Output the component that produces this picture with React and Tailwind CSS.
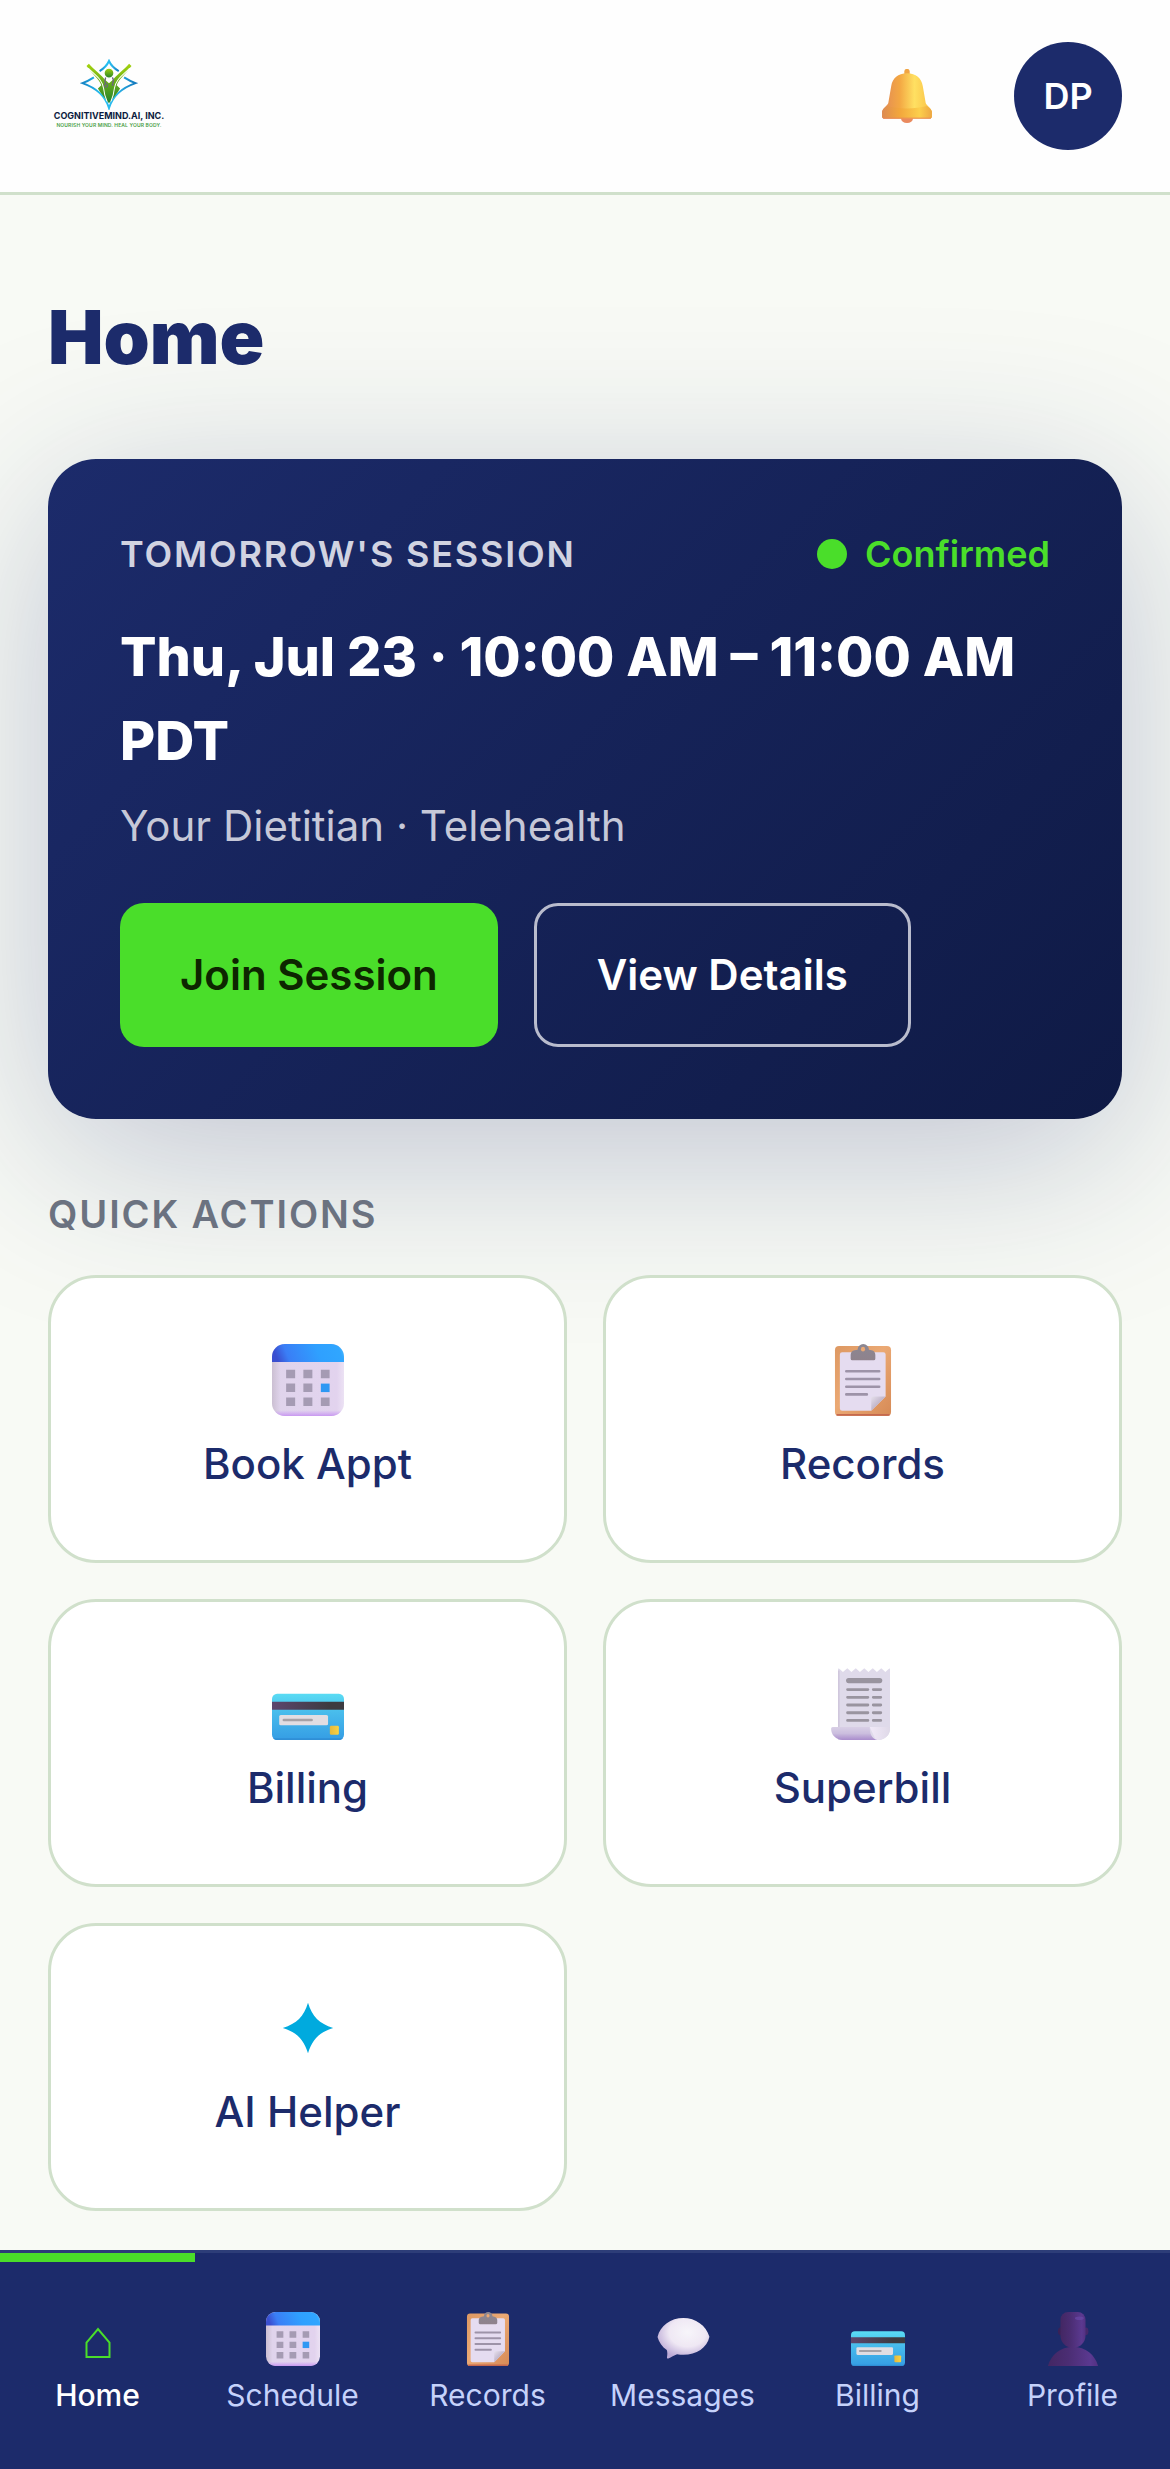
import React, { useState } from "react";

const QUICK_ACTIONS = [
  { label: "Book Appt", Icon: CalendarIcon },
  { label: "Records", Icon: ClipboardIcon },
  { label: "Billing", Icon: CreditCardIcon },
  { label: "Superbill", Icon: ReceiptIcon },
  { label: "AI Helper", Icon: SparkIcon },
];

const NAV_ITEMS = [
  { label: "Home", Icon: HouseIcon },
  { label: "Schedule", Icon: CalendarIcon },
  { label: "Records", Icon: ClipboardIcon },
  { label: "Messages", Icon: BubbleIcon },
  { label: "Billing", Icon: CreditCardIcon },
  { label: "Profile", Icon: PersonIcon },
];

/** Gradients shared by all the icons */
function IconDefs() {
  return (
    <svg className="absolute size-0" aria-hidden="true">
      <defs>
        <linearGradient id="cal-top" x1="0" x2="1" y1="0.1" y2="0">
          <stop offset="0" stopColor="#3a4fd0" />
          <stop offset="0.16" stopColor="#3a7ef6" />
          <stop offset="0.6" stopColor="#2fa0ff" />
          <stop offset="0.9" stopColor="#30a6ff" />
          <stop offset="1" stopColor="#55c4ff" />
        </linearGradient>
        <linearGradient id="cal-body" x1="0" x2="1" y1="0" y2="0">
          <stop offset="0" stopColor="#cbbfd2" />
          <stop offset="0.12" stopColor="#e0d4ec" />
          <stop offset="0.9" stopColor="#e2d3ee" />
          <stop offset="1" stopColor="#ece2f4" />
        </linearGradient>
        <linearGradient id="cal-foot" x1="0" x2="0" y1="0" y2="1">
          <stop offset="0.92" stopColor="#cc9df5" stopOpacity="0" />
          <stop offset="1" stopColor="#c898f0" />
        </linearGradient>
        <linearGradient id="board" x1="0" x2="1" y1="0" y2="1">
          <stop offset="0" stopColor="#dd9862" />
          <stop offset="0.45" stopColor="#eba974" />
          <stop offset="1" stopColor="#d68a56" />
        </linearGradient>
        <linearGradient id="fold" x1="0" x2="1" y1="0" y2="1">
          <stop offset="0" stopColor="#e6e0ec" />
          <stop offset="0.5" stopColor="#c1b6cb" />
        </linearGradient>
        <linearGradient id="clip" x1="0" x2="0" y1="0" y2="1">
          <stop offset="0" stopColor="#8b8792" />
          <stop offset="1" stopColor="#8f828c" />
        </linearGradient>
        <linearGradient id="card-body" x1="0" x2="0" y1="0" y2="1">
          <stop offset="0" stopColor="#5adcf4" />
          <stop offset="0.4" stopColor="#48bcec" />
          <stop offset="1" stopColor="#359de4" />
        </linearGradient>
        <linearGradient id="card-stripe" x1="0" x2="1" y1="0" y2="0">
          <stop offset="0" stopColor="#5d466e" />
          <stop offset="0.8" stopColor="#3d3b40" />
        </linearGradient>
        <linearGradient id="chip" x1="0" x2="1" y1="0" y2="0">
          <stop offset="0" stopColor="#e6b93a" />
          <stop offset="1" stopColor="#f8d244" />
        </linearGradient>
        <linearGradient id="curl" x1="0" x2="0" y1="0" y2="1">
          <stop offset="0" stopColor="#d9d0e6" />
          <stop offset="0.5" stopColor="#cbbede" />
          <stop offset="1" stopColor="#a98ccc" />
        </linearGradient>
        <linearGradient id="curl-end" x1="0" x2="1" y1="0" y2="0">
          <stop offset="0" stopColor="#f1e9f8" />
          <stop offset="1" stopColor="#dfd9e8" />
        </linearGradient>
        <radialGradient id="bubble" cx="0.58" cy="0.35" r="0.65">
          <stop offset="0" stopColor="#f7f5fa" />
          <stop offset="0.55" stopColor="#efe8f4" />
          <stop offset="1" stopColor="#bcaad6" />
        </radialGradient>
        <linearGradient id="person" x1="0" x2="1" y1="0" y2="0">
          <stop offset="0" stopColor="#432763" />
          <stop offset="0.4" stopColor="#4b2d73" />
          <stop offset="0.85" stopColor="#5b3990" />
          <stop offset="1" stopColor="#523182" />
        </linearGradient>
        <linearGradient id="bell" x1="0" x2="1" y1="0" y2="0">
          <stop offset="0" stopColor="#e28a56" />
          <stop offset="0.35" stopColor="#f3a743" />
          <stop offset="0.65" stopColor="#ffe062" />
          <stop offset="1" stopColor="#f9bf45" />
        </linearGradient>
        <linearGradient id="bell-rim" x1="0" x2="1" y1="0" y2="0">
          <stop offset="0" stopColor="#dd8b52" />
          <stop offset="0.35" stopColor="#f2a63c" />
          <stop offset="0.75" stopColor="#fccf4c" />
          <stop offset="1" stopColor="#eda743" />
        </linearGradient>
        <linearGradient id="logo-green" x1="0" x2="0" y1="0" y2="1">
          <stop offset="0" stopColor="#a6d40c" />
          <stop offset="1" stopColor="#22802b" />
        </linearGradient>
        <linearGradient id="logo-blue" x1="0" x2="1" y1="0" y2="0">
          <stop offset="0" stopColor="#1583c4" />
          <stop offset="0.35" stopColor="#25c0f2" />
          <stop offset="0.65" stopColor="#29b5ea" />
          <stop offset="1" stopColor="#1479bd" />
        </linearGradient>
      </defs>
    </svg>
  );
}

function CalendarIcon({ className }) {
  return (
    <svg viewBox="2 2 28 28" className={className} aria-hidden="true">
      <rect x="2" y="2" width="28" height="28" rx="5" fill="url(#cal-body)" />
      <rect x="2" y="2" width="28" height="28" rx="5" fill="url(#cal-foot)" />
      <path d="M2 9V7a5 5 0 0 1 5-5h18a5 5 0 0 1 5 5v2Z" fill="url(#cal-top)" />
      <path
        d="M7.5 12H11v3.3H7.5ZM14.2 12h3.5v3.3h-3.5ZM21 12h3.4v3.3H21ZM7.5 17.4H11v3.3H7.5ZM14.2 17.4h3.5v3.3h-3.5ZM7.5 22.8H11v3.3H7.5ZM14.2 22.8h3.5v3.3h-3.5ZM21 22.8h3.4v3.3H21Z"
        fill="#a59bb3"
      />
      <path d="M21 17.4h3.4v3.3H21Z" fill="#2f98f3" />
    </svg>
  );
}

function ClipboardIcon({ className }) {
  return (
    <svg viewBox="2 2 28 28" className={className} aria-hidden="true">
      <rect x="5.1" y="2.8" width="21.8" height="27.2" rx="1.6" fill="url(#board)" />
      <path d="M6 29.6h20" stroke="#c5694f" strokeWidth="0.7" strokeLinecap="round" />
      <path
        d="M7.9 5.2h16a.9.9 0 0 1 .9.9v16.3L19.2 28H7.9a.9.9 0 0 1-.9-.9v-21a.9.9 0 0 1 .9-.9Z"
        fill="#e5dcf0"
      />
      <path d="M19.2 28v-4.9a.7.7 0 0 1 .7-.7h4.9Z" fill="url(#fold)" />
      <path
        d="M13.9 4.2a2.2 2.2 0 0 1 4.4 0l1 .2a1.9 1.9 0 0 1 1.5 1.8v1.5a.6.6 0 0 1-.6.6h-8.4a.6.6 0 0 1-.6-.6V6.2a1.9 1.9 0 0 1 1.5-1.8Z"
        fill="url(#clip)"
      />
      <ellipse cx="16" cy="4" rx="0.8" ry="0.9" fill="#eba974" />
      <path
        d="M9.5 12.6h12.8M9.5 15.6h12.8M9.5 18.6h12.8M9.5 21.6h8"
        stroke="#9d93a8"
        strokeWidth="1"
        strokeLinecap="round"
      />
    </svg>
  );
}

function CreditCardIcon({ className }) {
  return (
    <svg viewBox="2 2 28 28" className={className} aria-hidden="true">
      <rect x="2" y="12" width="28" height="18" rx="2" fill="url(#card-body)" />
      <path d="M2.4 29.3a2 2 0 0 0 1.600.7h24a2 2 0 0 0 1.600-.7Z" fill="#2f8fd6" />
      <path d="M2 15.1h28v3.1H2Z" fill="url(#card-stripe)" />
      <rect x="4.8" y="20.3" width="19" height="4" rx="0.6" fill="#e1dde2" />
      <path d="M6.600 22.200h10.800" stroke="#a5a1a6" strokeWidth="1" strokeLinecap="round" />
      <rect x="24.5" y="24.5" width="3.5" height="3.5" rx="0.5" fill="url(#chip)" />
    </svg>
  );
}

function ReceiptIcon({ className }) {
  return (
    <svg viewBox="2 2 28 28" className={className} aria-hidden="true">
      <path
        d="M6.3 2.2l.5.1 1.400 1.300L9.900 2.100l1.600 1.500 1.700-1.500 1.600 1.500 1.700-1.500 1.600 1.500 1.700-1.500 1.600 1.500 1.700-1.500 1.600 1.500 1.400-1.300.4-.1V25.500a4.500 4.500 0 0 1-4.500 4.500H6.300Z"
        fill="#dfdaea"
      />
      <path d="M6.6 3v22" stroke="#cfc6dc" strokeWidth="0.6" />
      <path d="M10.4 6.9h12.1" stroke="#99949f" strokeWidth="2" strokeLinecap="round" />
      <path
        d="M10 10.4h7.9M20 10.4h2.9M10 13.4h7.9M20 13.4h2.9M10 16.4h7.9M20 16.4h2.9M10 19.4h7.9M20 19.4h2.9M10 22.4h7.9M20 22.4h2.9"
        stroke="#99949f"
        strokeWidth="1.1"
        strokeLinecap="round"
      />
      <path d="M18.6 24.9h7.9v.6a4.500 4.500 0 0 1-4.500 4.500h-1Z" fill="url(#curl-end)" />
      <path
        d="M4.2 24.9h14.4c0 2.800.9 4.500 3 5.100H8a4.400 4.400 0 0 1-4.400-4.500.6.6 0 0 1 .6-.6Z"
        fill="url(#curl)"
      />
    </svg>
  );
}

function SparkIcon({ className }) {
  return (
    <svg viewBox="2 2 28 28" className={className} aria-hidden="true">
      <path
        d="M16 6.2C17.7 11.6 20.3 14.3 25.8 16C20.3 17.7 17.7 20.4 16 25.8C14.3 20.4 11.7 17.7 6.2 16C11.7 14.3 14.3 11.6 16 6.2Z"
        fill="#00aade"
      />
    </svg>
  );
}

function HouseIcon({ className }) {
  return (
    <svg viewBox="0 0 54 54" className={className} aria-hidden="true">
      <path d="M15.5 45V30.500L27 17l11.500 13.500V45Z" fill="none" stroke="#4ade2a" strokeWidth="2" />
    </svg>
  );
}

function BubbleIcon({ className }) {
  return (
    <svg viewBox="2 2 28 28" className={className} aria-hidden="true">
      <path
        d="M16.2 5.1C22.5 5.1 28 9 29.7 14.8C28.5 20.5 23 24.2 16.2 24.2C15.2 24.2 14 24.1 12.9 23.9C11.4 24.5 9.9 25.5 8.4 26.1C7.9 26.3 7.6 26 7.7 25.5C7.9 24.2 8 23 7.6 21.7C5.2 20 3.5 17.7 2.8 14.9C4.2 9 9.7 5.1 16.2 5.1Z"
        fill="url(#bubble)"
      />
    </svg>
  );
}

function PersonIcon({ className }) {
  return (
    <svg viewBox="2 2 28 28" className={className} aria-hidden="true">
      <ellipse cx="9.4" cy="12" rx="1.2" ry="2" fill="#3a2157" />
      <ellipse cx="22.8" cy="12" rx="1.2" ry="2" fill="#45286c" />
      <path d="M3 30C4.5 24.3 9.5 20 16 20s11.5 4.3 13 10Z" fill="url(#person)" />
      <path
        d="M13.5 2h5a4 4 0 0 1 4 4v8c0 3.6-2.6 6.5-6.5 6.5S9.5 17.6 9.5 14V6a4 4 0 0 1 4-4Z"
        fill="url(#person)"
      />
      <ellipse cx="19.3" cy="5.2" rx="2.3" ry="0.9" fill="#6b48a6" opacity="0.7" />
    </svg>
  );
}

function BellIcon({ className }) {
  return (
    <svg viewBox="2 2 28 28" className={className} aria-hidden="true">
      <ellipse cx="16" cy="27.7" rx="3.1" ry="2.3" fill="#ea8a5e" />
      <path d="M14.6 5V3.3a1.4 1.4 0 0 1 2.8 0V5Z" fill="#f0a544" />
      <path
        d="M16 4.2c4.7 0 7.5 2.6 8.2 6.7l1.5 8.7c.4 1.3 2.6 2.3 3.2 4.4v2.8a.9.9 0 0 1-.9.9H4a.9.9 0 0 1-.9-.9V24c.6-2.1 2.8-3.1 3.2-4.4l1.5-8.7c.7-4.1 3.5-6.7 8.2-6.7Z"
        fill="url(#bell)"
      />
      <path
        d="M5.7 21.2c6 1.7 14.6 1.7 20.6 0 1 .7 2.2 1.6 2.6 2.9v2.7a.9.9 0 0 1-.9.9H4a.9.9 0 0 1-.9-.9v-2.7c.4-1.3 1.6-2.2 2.6-2.9Z"
        fill="url(#bell-rim)"
      />
      <path d="M3.6 27.5h24.8" stroke="#e8865a" strokeWidth="0.5" />
    </svg>
  );
}

function Logo() {
  return (
    <a href="#home" className="flex w-[122px] flex-col items-center pb-1.5 whitespace-nowrap">
      <svg viewBox="238 178 172 152" className="h-[51px] w-[58px]" aria-hidden="true">
        <g fill="none" stroke="url(#logo-blue)" strokeWidth="6">
          <path d="M296 214Q316 202 324 184Q332 202 353 214" />
          <path d="M279 233Q262 244 245 250Q308 272 324 324Q340 272 403 250Q386 244 369 233" />
        </g>
        <g fill="url(#logo-green)">
          <path d="M264 192C282 212 302 226 312 240L324 250L336 240C346 226 366 212 384 192L391 199C376 220 352 240 347 256L357 266C348 282 334 296 324 310C314 296 300 282 291 266L301 256C296 240 272 220 257 199Z" />
          <circle cx="324" cy="220" r="15" stroke="#fff" strokeWidth="4" />
        </g>
        <path
          d="M262 205C284 228 305 240 308 266Q310 286 318 304M386 205C364 228 343 240 340 266Q338 286 330 304"
          fill="none"
          stroke="#fff"
          strokeWidth="3"
        />
        <path d="M314 233q-4 10 0 20M334 233q6 10 0 18" fill="none" stroke="#6a6480" strokeWidth="4" />
        <circle cx="315" cy="257" r="5" fill="none" stroke="#6a6480" strokeWidth="3" />
        <circle cx="335" cy="255" r="3" fill="#6a6480" />
      </svg>
      <span className="text-[9px] leading-[12px] font-bold text-[#0c1b40]">COGNITIVEMIND.AI, INC.</span>
      <span className="text-[5px] leading-[6px] font-semibold tracking-wide text-[#4aa046]">
        NOURISH YOUR MIND. HEAL YOUR BODY.
      </span>
    </a>
  );
}

function SessionCard() {
  return (
    <section className="rounded-[48px] bg-linear-135 from-[#1c2b6b] to-[#0f1a45] p-18 shadow-[0_36px_180px_rgba(27,42,107,0.26)]">
      <div className="flex items-center justify-between text-4xl leading-[46px] font-semibold">
        <h2 className="tracking-wider text-[#d1d3e1] uppercase">Tomorrow's Session</h2>
        <div className="flex items-center gap-[18px] text-[#4ade2a]">
          <span className="size-[30px] rounded-full bg-[#4ade2a]" />
          Confirmed
        </div>
      </div>
      <p className="mt-[38px] text-[54px] leading-[84px] font-extrabold text-white">
        Thu, Jul 23 · 10:00 AM – 11:00 AM PDT
      </p>
      <p className="mt-3 text-[42px] leading-[62px] text-[#c6c8d8]">Your Dietitian · Telehealth</p>
      <div className="mt-[46px] flex gap-9 text-[42px] font-semibold">
        <button type="button" className="h-36 rounded-3xl bg-[#4ade2a] px-15 pb-0.5 text-[#0d2600]">
          Join Session
        </button>
        <button type="button" className="h-36 rounded-3xl border-3 border-[#b9bccd] px-15 pb-0.5 text-white">
          View Details
        </button>
      </div>
    </section>
  );
}

export default function App() {
  const [activeTab, setActiveTab] = useState("Home");

  return (
    <div className="flex min-h-screen flex-col bg-[#f8faf5] font-['Inter',sans-serif]">
      <IconDefs />

      <header className="flex items-center justify-between border-b-3 border-[#d0e0cb] bg-[#fefefe] px-12 py-[42px]">
        <Logo />
        <div className="flex items-center gap-20">
          <button type="button" aria-label="Notifications">
            <BellIcon className="size-[54px]" />
          </button>
          <button type="button" className="size-27 rounded-full bg-[#1c2b6b] text-4xl font-semibold text-white">
            DP
          </button>
        </div>
      </header>

      <main className="flex-1 px-12 pt-25 pb-[39px]">
        <h1 className="mb-20 text-[74px] leading-[84px] font-black text-[#1c2b6b]">Home</h1>

        <SessionCard />

        <h2 className="mt-[68px] mb-[34px] text-[38px] leading-[54px] font-semibold tracking-wider text-[#6b7280] uppercase">
          Quick Actions
        </h2>
        <div className="grid grid-cols-2 gap-9">
          {QUICK_ACTIONS.map(({ label, Icon }) => (
            <button
              key={label}
              type="button"
              className="flex min-h-72 flex-col items-center justify-center gap-4 rounded-[48px] border-3 border-[#d0e0cb] bg-white text-[42px] leading-[63px] font-medium text-[#1c2b6b]"
            >
              <Icon className="size-18" />
              {label}
            </button>
          ))}
        </div>
      </main>

      {/* Bottom tab bar */}
      <nav className="sticky bottom-0 grid grid-cols-6 border-t-3 border-[#2d3d78] bg-[#1c2b6b]">
        {NAV_ITEMS.map(({ label, Icon }) => {
          const active = label === activeTab;
          return (
            <button
              key={label}
              type="button"
              onClick={() => setActiveTab(label)}
              aria-current={active ? "page" : undefined}
              className={`flex flex-col items-center gap-[11px] border-t-9 pt-[50px] pb-14 text-[30px] leading-[36px] ${
                active ? "border-[#4ade2a] font-medium text-white" : "border-transparent text-[#c5d2fb]"
              }`}
            >
              <Icon className="size-[54px]" />
              {label}
            </button>
          );
        })}
      </nav>
    </div>
  );
}
